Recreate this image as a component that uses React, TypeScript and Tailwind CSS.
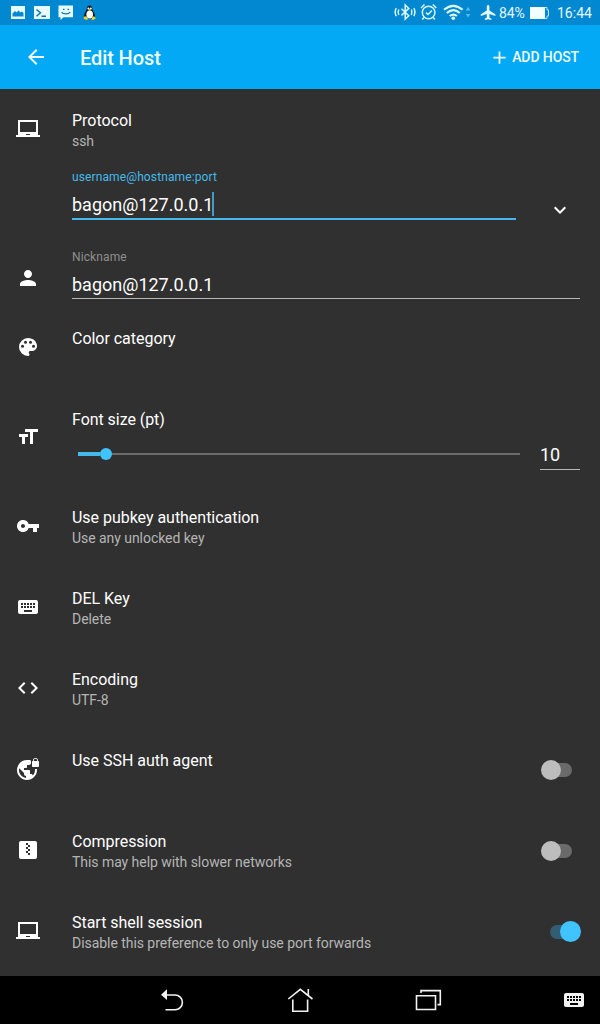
import type { ReactNode } from "react";
import {
  MdAdd,
  MdArrowBack,
  MdCode,
  MdExpandMore,
  MdFormatSize,
  MdKeyboard,
  MdLaptopChromebook,
  MdPerson,
  MdVpnKey,
} from "react-icons/md";

function ZipIcon() {
  return (
    <svg width="24" height="24" viewBox="0 0 24 24" fill="currentColor">
      <rect x="3" y="3" width="18" height="18" rx="2" />
      <path
        fill="#303030"
        d="M10 5h2v2h-2zM12 7h2v2h-2zM10 9h2v2h-2zM12 11h2v2h-2zM10 13h2v2h-2zM12 15h2v2h-2z"
      />
    </svg>
  );
}

function PaletteIcon() {
  return (
    <svg width="24" height="24" viewBox="0 0 24 24" fill="currentColor">
      <path d="M12 3a9 9 0 0 0 0 18c.83 0 1.500-.67 1.500-1.500 0-.39-.15-.74-.39-1.010-.23-.26-.38-.61-.38-.99 0-.83.67-1.500 1.500-1.500H16c2.760 0 5-2.240 5-5 0-4.420-4.030-8-9-8z" />
      <g fill="#303030">
        <circle cx="6.500" cy="11.200" r="1.500" />
        <circle cx="9.500" cy="7.200" r="1.500" />
        <circle cx="14.500" cy="7.200" r="1.500" />
        <circle cx="17.500" cy="11.200" r="1.500" />
      </g>
    </svg>
  );
}

function GlobeLockIcon() {
  return (
    <svg width="24" height="24" viewBox="0 0 24 24" fill="currentColor">
      <path d="M22 4v-.5a2.500 2.500 0 0 0-5 0V4c-.55 0-1 .45-1 1v4c0 .55.45 1 1 1h5c.55 0 1-.45 1-1V5c0-.55-.45-1-1-1zm-.8 0h-3.400v-.5a1.700 1.700 0 0 1 3.400 0V4zm-2.280 8c.04.33.08.66.08 1 0 2.080-.8 3.970-2.100 5.390-.26-.81-1-1.390-1.900-1.390h-1v-3c0-.55-.45-1-1-1H8v-2h2c.55 0 1-.45 1-1V8h2c1.100 0 2-.9 2-2V3.460c-.95-.3-1.950-.46-3-.46h-1C5.480 3 1 7.480 1 13s4.480 10 10 10 10-4.480 10-10c0-.34-.02-.67-.05-1h-2.030zM10 20.930c-3.950-.49-7-3.850-7-7.930 0-.62.08-1.210.21-1.790L8 16v1c0 1.100.9 2 2 2v1.930z" />
    </svg>
  );
}

function StatusBar() {
  return (
    <header className="flex h-[25px] items-center bg-[#0288d1] text-[#e6f8ff]">
      <svg width="100" height="25" viewBox="0 0 100 25" fill="#e6fbff">
        <path
          fillRule="evenodd"
          d="M11 6h14v13H11zM12.500 16.500h11v-3.500l-1.500-1.500-1.500 1-2-2-2 2-1.500-1.500-2.500 2.500z"
        />
        <path d="M34 6h16v13H34z" />
        <path d="M36.500 9.500l4 3.300-4 3.400M41.500 16.300h4.500" fill="none" stroke="#0b6fa8" strokeWidth="1.400" />
        <path d="M58.500 5.500H73v11.800H63.500L60.500 20v-2.700h-2z" />
        <path d="M61.500 12c1.500 2.600 7.300 2.600 8.800 0M63 9.300h1.500M67.500 9.300H69" fill="none" stroke="#0873aa" strokeWidth="1.200" />
        <path fill="#101820" d="M89.500 5.500c2 0 2.800 1.500 2.800 3.300 0 2 2.700 4 2.700 7.200l-1.500 2.500h-8L84 16c0-3 2.800-5.200 2.800-7.200 0-1.800.7-3.300 2.700-3.300z" />
        <ellipse cx="89.700" cy="14.500" rx="3.300" ry="4" fill="#fff" />
        <circle cx="88.400" cy="8.400" r="1" fill="#fff" />
        <circle cx="90.800" cy="8.400" r="1" fill="#fff" />
        <path fill="#f0d52a" d="M88 9.700l1.700-.6 1.800.6-1.700 1.300zM84 16.700l2.400-.5 1.900 3-2.300.5-2.300-.9zM92.600 16.200l2.600.7.300 1.700-2.300 1.300-1.700-.5z" />
      </svg>
      <svg className="ml-auto" width="106" height="25" viewBox="392.7 0 106 25" fill="none" stroke="#d9f7ff" strokeWidth="1.500">
        <path d="M401.200 8.700l7.300 7-3.600 3.300v-14l3.600 3.400-7.300 7M398.500 9.500q-1.500 2.700 0 5.500M396 8.200q-2.300 4 0 8M411 9.500q1.500 2.700 0 5.500M413.500 8.200q2.300 4 0 8" />
        <circle cx="428.300" cy="12.500" r="6.300" />
        <path d="M420.700 8l3.500-3.500M436 8l-3.500-3.500M423.500 17.500l-1.500 2M433 17.500l1.500 2M425.500 12.500l2.200 2 4-4" />
        <path d="M443.700 9.800q9.300-8 18.600 0M446.500 13q6.500-5.600 13 0M449.400 16q3.600-2.800 7.200 0" strokeWidth="2.100" />
        <circle cx="453" cy="18.200" r="1.800" fill="#e6fbff" stroke="none" />
        <path d="M465.500 10.500l2.300-3.500 2.300 3.500zM465.500 14l2.300 3.500 2.300-3.500z" fill="#57bce9" stroke="none" />
        <path d="M486.500 6.200q1.300-3 2.600 0v4.300l6 3.800v1.600l-6-1.800v3.300l2 1.400v1.300l-3.300-.8-3.300.8v-1.300l2-1.400v-3.300l-6 1.800v-1.600l6-3.800z" fill="#e6fbff" stroke="none" />
      </svg>
      <span className="w-[29px] pt-px text-[14px] leading-[24px] tracking-[-0.100px]">84%</span>
      <svg className="ml-[1px]" width="21" height="14" viewBox="0 0 21 14">
        <path d="M1 1h15v12H1z" fill="#f2fdff" />
        <path d="M16 1.500h2v2.500h1.500v6H18v2.500h-2" fill="none" stroke="#b6e6fb" />
      </svg>
      <span className="ml-[7px] w-[43px] pt-px text-[14px] leading-[24px]">16:44</span>
    </header>
  );
}

function AppBar() {
  return (
    <div className="flex h-16 items-center bg-[#03a9f4] pr-[21px] pl-[24px] text-[#eefcff]">
      <MdArrowBack size={24} />
      <h1 className="ml-8 pt-[2px] text-[20px] leading-6 font-medium tracking-[-0.100px]">Edit Host</h1>
      <button className="ml-auto flex items-center gap-[2px] text-[14px] font-medium tracking-[-0.100px]">
        <MdAdd size={21} />
        ADD HOST
      </button>
    </div>
  );
}

type RowProps = {
  icon: ReactNode;
  title: string;
  summary?: string;
  checked?: boolean;
};

function Switch({ on }: { on: boolean }) {
  return (
    <span className={`mr-[19px] flex w-10 items-center self-center ${on ? "justify-end" : "justify-start"}`}>
      {!on && <span className="z-10 size-5 rounded-full bg-[#bdbdbd]" />}
      <span
        className={
          on
            ? "-mr-[13px] h-[14px] w-[23px] rounded-full bg-[#335d72]"
            : "-ml-[13px] h-[14px] w-6 rounded-full bg-[#6a6a6a]"
        }
      />
      {on && <span className="z-10 size-[21px] rounded-full bg-[#40c4ff]" />}
    </span>
  );
}

function Row({ icon, title, summary, checked }: RowProps) {
  return (
    <div className="flex h-[81px] shrink-0 items-start pl-4">
      <span className="mt-7">{icon}</span>
      <div className="mt-[21px] ml-8 grow">
        <div className="text-[16px] leading-[22px] tracking-[-0.030px]">{title}</div>
        {summary && (
          <div className="text-[14px] leading-[19px] tracking-[-0.050px] text-[#b5b5b5]">{summary}</div>
        )}
      </div>
      {checked !== undefined && <Switch on={checked} />}
    </div>
  );
}

function NavBar() {
  return (
    <nav className="flex h-12 items-center bg-black pl-[158px] text-[#f2f2f2]">
      <svg width="28" height="28" viewBox="0 0 28 28" fill="none" stroke="currentColor" strokeWidth="1.600">
        <path d="M8 9h9a7.300 7.300 0 0 1 0 14.800H7.500" />
        <path d="M3 8.700l6-5.400v10.800z" fill="currentColor" stroke="none" />
      </svg>
      <svg className="ml-[100px]" width="28" height="28" viewBox="0 0 28 28" fill="none" stroke="currentColor" strokeWidth="1.600">
        <path d="M2.300 13L14.300 3.300 26.500 13M22.300 9.500V3M6.800 13.500v11.800h14.800V13.500" />
      </svg>
      <svg className="ml-[100px]" width="28" height="28" viewBox="0 0 28 28" fill="none" stroke="currentColor" strokeWidth="1.600">
        <path d="M2.500 9.800h19v13.700h-19zM7 7V4.600h19.300v14H23.500" />
      </svg>
      <MdKeyboard className="ml-[120px]" size={24} />
    </nav>
  );
}

export default function App() {
  return (
    <main className="flex h-[1024px] w-[600px] flex-col overflow-hidden bg-[#303030] font-[Roboto,sans-serif] text-white">
      <StatusBar />
      <AppBar />
      <div className="flex grow flex-col">
        <div className="h-[76px]">
          <Row icon={<MdLaptopChromebook size={24} />} title="Protocol" summary="ssh" />
        </div>
        <div className="flex h-20 items-start pl-[72px]">
          <label className="mt-1 block w-[444px] border-b-2 border-[#45b9ea]">
            <span className="block text-[12px] leading-4 tracking-[0.120px] text-[#45b9ea]">
              username@hostname:port
            </span>
            <span className="mt-2 flex h-[25px] items-start text-[18px] leading-6">
              bagon@127.0.0.1
              <span className="-mt-px -ml-px h-[24px] w-[2px] bg-[#3f9fca]" />
            </span>
          </label>
          <MdExpandMore className="mt-[33px] ml-8" size={24} />
        </div>
        <div className="flex h-[62px] items-start pl-4">
          <MdPerson className="mt-[21px]" size={24} />
          <label className="mt-1 ml-8 block w-[508px] border-b border-[#b8b8b8]">
            <span className="block text-[12px] leading-4 tracking-[0.120px] text-[#8f8f8f]">Nickname</span>
            <span className="mt-2 block h-[25px] text-[18px] leading-6">bagon@127.0.0.1</span>
          </label>
        </div>
        <Row icon={<PaletteIcon />} title="Color category" />
        <div className="flex h-[98px] items-start pl-4">
          <MdFormatSize className="mt-[37px]" size={24} />
          <div className="mt-[21px] ml-8 w-[448px]">
            <div className="text-[16px] leading-[22px] tracking-[-0.050px]">Font size (pt)</div>
            <div className="mt-[17px] ml-[6px] flex h-3 items-center">
              <span className="h-1 w-[22px] bg-[#45b9ea]" />
              <span className="size-3 rounded-full bg-[#40c4ff]" />
              <span className="h-[2px] grow bg-[#6b6b6b]" />
            </div>
          </div>
          <span className="mt-[55px] ml-5 block h-[27px] w-10 border-b border-[#b8b8b8] text-[18px] leading-6">10</span>
        </div>
        <Row icon={<MdVpnKey size={24} />} title="Use pubkey authentication" summary="Use any unlocked key" />
        <Row icon={<MdKeyboard size={24} />} title="DEL Key" summary="Delete" />
        <Row icon={<MdCode size={24} />} title="Encoding" summary="UTF-8" />
        <Row icon={<GlobeLockIcon />} title="Use SSH auth agent" checked={false} />
        <Row icon={<ZipIcon />} title="Compression" summary="This may help with slower networks" checked={false} />
        <Row
          icon={<MdLaptopChromebook size={24} />}
          title="Start shell session"
          summary="Disable this preference to only use port forwards"
          checked={true}
        />
      </div>
      <NavBar />
    </main>
  );
}
